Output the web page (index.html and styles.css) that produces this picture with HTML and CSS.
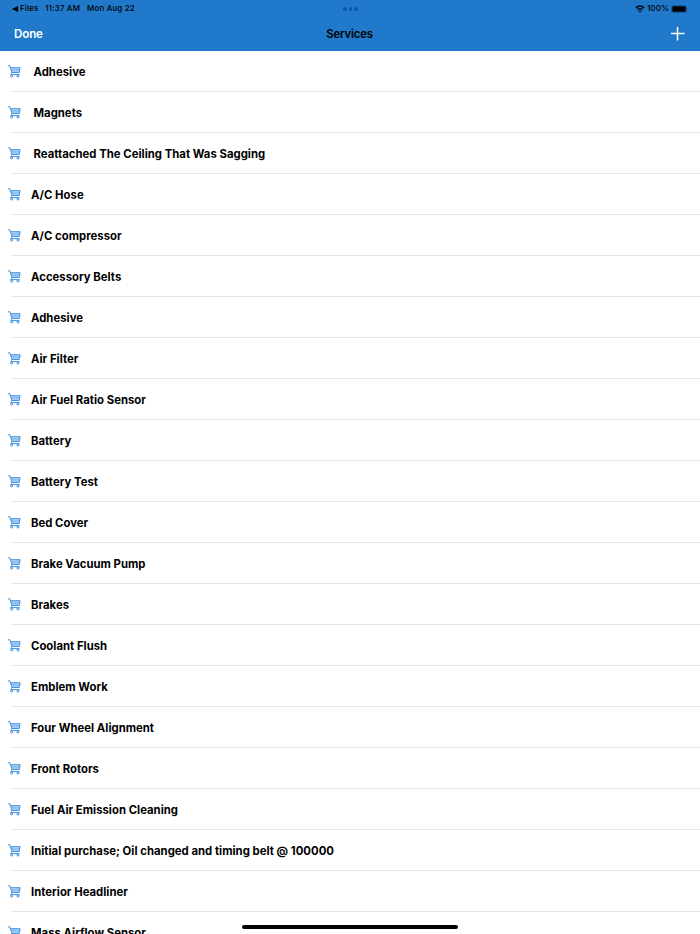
FILE: index.html
```html
<!DOCTYPE html>
<html lang="en">
<head>
<meta charset="utf-8">
<title>Services</title>
<link rel="stylesheet" href="styles.css">
</head>
<body>
<svg class="defs" width="0" height="0" aria-hidden="true">
  <symbol id="cart" viewBox="0 0 13 13">
    <path d="M2.9 2.7H12L11.3 7.4H4.1Z" fill="#c3dff9"/>
    <path d="M3 4.3H11.7M3.5 5.9H11.4" fill="none" stroke="#5ba0e6" stroke-width=".7"/>
    <path d="M.4 .8H1.8L4 7.5 2.8 9.6H11.2M2.6 2.7H12.1L11.3 7.5H4" fill="none" stroke="#3188de" stroke-width=".9" stroke-linejoin="round" stroke-linecap="round"/>
    <circle cx="3.7" cy="11" r="1.1" fill="#d6eaff" stroke="#3188de" stroke-width=".8"/>
    <circle cx="10" cy="11" r="1.1" fill="#d6eaff" stroke="#3188de" stroke-width=".8"/>
  </symbol>
</svg>
<div class="screen">
  <header class="header">
    <div class="status">
      <div class="status-left">
        <svg class="back" viewBox="0 0 6 6"><path d="M0 3 6 0V6Z"/></svg>
        <span class="files">Files</span><span class="time">11:37 AM</span><span class="date">Mon Aug 22</span>
      </div>
      <div class="dots"><i></i><i></i><i></i></div>
      <div class="status-right">
        <svg class="wifi" viewBox="0 0 10 8"><path d="M.7 2.9Q5-.9 9.3 2.9M2.4 4.8Q5 2.5 7.6 4.8" fill="none" stroke="#000" stroke-width="1.3"/><path d="M3.5 6 5 7.6 6.5 6Q5 4.9 3.5 6Z"/></svg>
        <span class="percent">100%</span>
        <svg class="battery" viewBox="0 0 18 8"><rect x=".4" y=".4" width="15.2" height="7.2" rx="2.2" fill="none" stroke="#134a7d" stroke-width=".7"/><rect x="1.3" y="1.3" width="13.4" height="5.4" rx="1.2"/><path d="M16.4 2.7Q17.5 4 16.4 5.3Z" fill="#134a7d"/></svg>
      </div>
    </div>
    <nav class="nav">
      <span class="done">Done</span>
      <h1 class="title">Services</h1>
      <svg class="add" viewBox="0 0 14 14"><path d="M6.5 0V13.5M0 6.5H13.5" stroke="#fff" stroke-width="1.5"/></svg>
    </nav>
  </header>
  <ul class="list">
    <li class="row indented"><svg class="cart"><use href="#cart"/></svg><span class="label">Adhesive</span></li>
    <li class="row indented"><svg class="cart"><use href="#cart"/></svg><span class="label">Magnets</span></li>
    <li class="row indented"><svg class="cart"><use href="#cart"/></svg><span class="label">Reattached The Ceiling That Was Sagging</span></li>
    <li class="row"><svg class="cart"><use href="#cart"/></svg><span class="label">A/C Hose</span></li>
    <li class="row"><svg class="cart"><use href="#cart"/></svg><span class="label">A/C compressor</span></li>
    <li class="row"><svg class="cart"><use href="#cart"/></svg><span class="label">Accessory Belts</span></li>
    <li class="row"><svg class="cart"><use href="#cart"/></svg><span class="label">Adhesive</span></li>
    <li class="row"><svg class="cart"><use href="#cart"/></svg><span class="label">Air Filter</span></li>
    <li class="row"><svg class="cart"><use href="#cart"/></svg><span class="label">Air Fuel Ratio Sensor</span></li>
    <li class="row"><svg class="cart"><use href="#cart"/></svg><span class="label">Battery</span></li>
    <li class="row"><svg class="cart"><use href="#cart"/></svg><span class="label">Battery Test</span></li>
    <li class="row"><svg class="cart"><use href="#cart"/></svg><span class="label">Bed Cover</span></li>
    <li class="row"><svg class="cart"><use href="#cart"/></svg><span class="label">Brake Vacuum Pump</span></li>
    <li class="row"><svg class="cart"><use href="#cart"/></svg><span class="label">Brakes</span></li>
    <li class="row"><svg class="cart"><use href="#cart"/></svg><span class="label">Coolant Flush</span></li>
    <li class="row"><svg class="cart"><use href="#cart"/></svg><span class="label">Emblem Work</span></li>
    <li class="row"><svg class="cart"><use href="#cart"/></svg><span class="label">Four Wheel Alignment</span></li>
    <li class="row"><svg class="cart"><use href="#cart"/></svg><span class="label">Front Rotors</span></li>
    <li class="row"><svg class="cart"><use href="#cart"/></svg><span class="label">Fuel Air Emission Cleaning</span></li>
    <li class="row"><svg class="cart"><use href="#cart"/></svg><span class="label">Initial purchase; Oil changed and timing belt @ 100000</span></li>
    <li class="row"><svg class="cart"><use href="#cart"/></svg><span class="label">Interior Headliner</span></li>
    <li class="row"><svg class="cart"><use href="#cart"/></svg><span class="label">Mass Airflow Sensor</span></li>
  </ul>
  <div class="home-indicator"></div>
</div>
</body>
</html>
```
FILE: styles.css
```css
* { box-sizing: border-box; }
body {
  margin: 0;
  background: #fff;
  color: #000;
  font-family: Inter, "Liberation Sans", sans-serif;
}
.defs { position: absolute; }
.screen {
  position: relative;
  height: 934px;
  overflow: hidden;
}
.header {
  height: 51px;
  background: #2179cb;
}
.status {
  display: grid;
  grid-template-columns: 1fr auto 1fr;
  align-items: center;
  height: 17px;
  padding: 0 11px 0 12px;
  font-size: 8px;
  font-weight: 500;
  line-height: 17px;
  letter-spacing: 0.12px;
}
.status-left, .status-right { display: flex; align-items: center; white-space: nowrap; }
.status-right { justify-content: flex-end; }
.back { width: 6px; height: 6px; margin-right: 2px; }
.time { margin-left: 7px; }
.date { margin-left: 7px; }
.dots { display: flex; gap: 2px; padding-top: 1px; }
.dots i { width: 3.5px; height: 3.5px; border-radius: 50%; background: #0b58b0; }
.wifi { width: 10px; height: 8px; margin-right: 2px; }
.battery { width: 18px; height: 8px; margin-left: 2px; }
.nav {
  display: grid;
  grid-template-columns: 1fr auto 1fr;
  align-items: center;
  height: 34px;
  padding: 0 15px 0 14px;
}
.done { color: #fff; font-size: 11.6px; font-weight: 600; letter-spacing: -0.15px; }
.title { margin: 0; font-size: 11.3px; font-weight: 600; letter-spacing: -0.15px; }
.add { width: 14px; height: 14px; justify-self: end; }
.list { margin: 0; padding: 0; list-style: none; }
.row {
  display: flex;
  align-items: center;
  height: 41px;
  padding-left: 8px;
  background: linear-gradient(#e5e5e6, #e5e5e6) 11px 100% / 100% 1px no-repeat;
}
.cart { width: 13px; height: 13px; margin-right: 10px; flex: none; }
.indented .cart { margin-right: 12.5px; }
.label { font-size: 11.3px; font-weight: 650; letter-spacing: 0.03px; white-space: nowrap; }
.home-indicator {
  position: absolute;
  left: 242px;
  bottom: 5px;
  width: 216px;
  height: 4px;
  border-radius: 2px;
  background: #000;
}
```
